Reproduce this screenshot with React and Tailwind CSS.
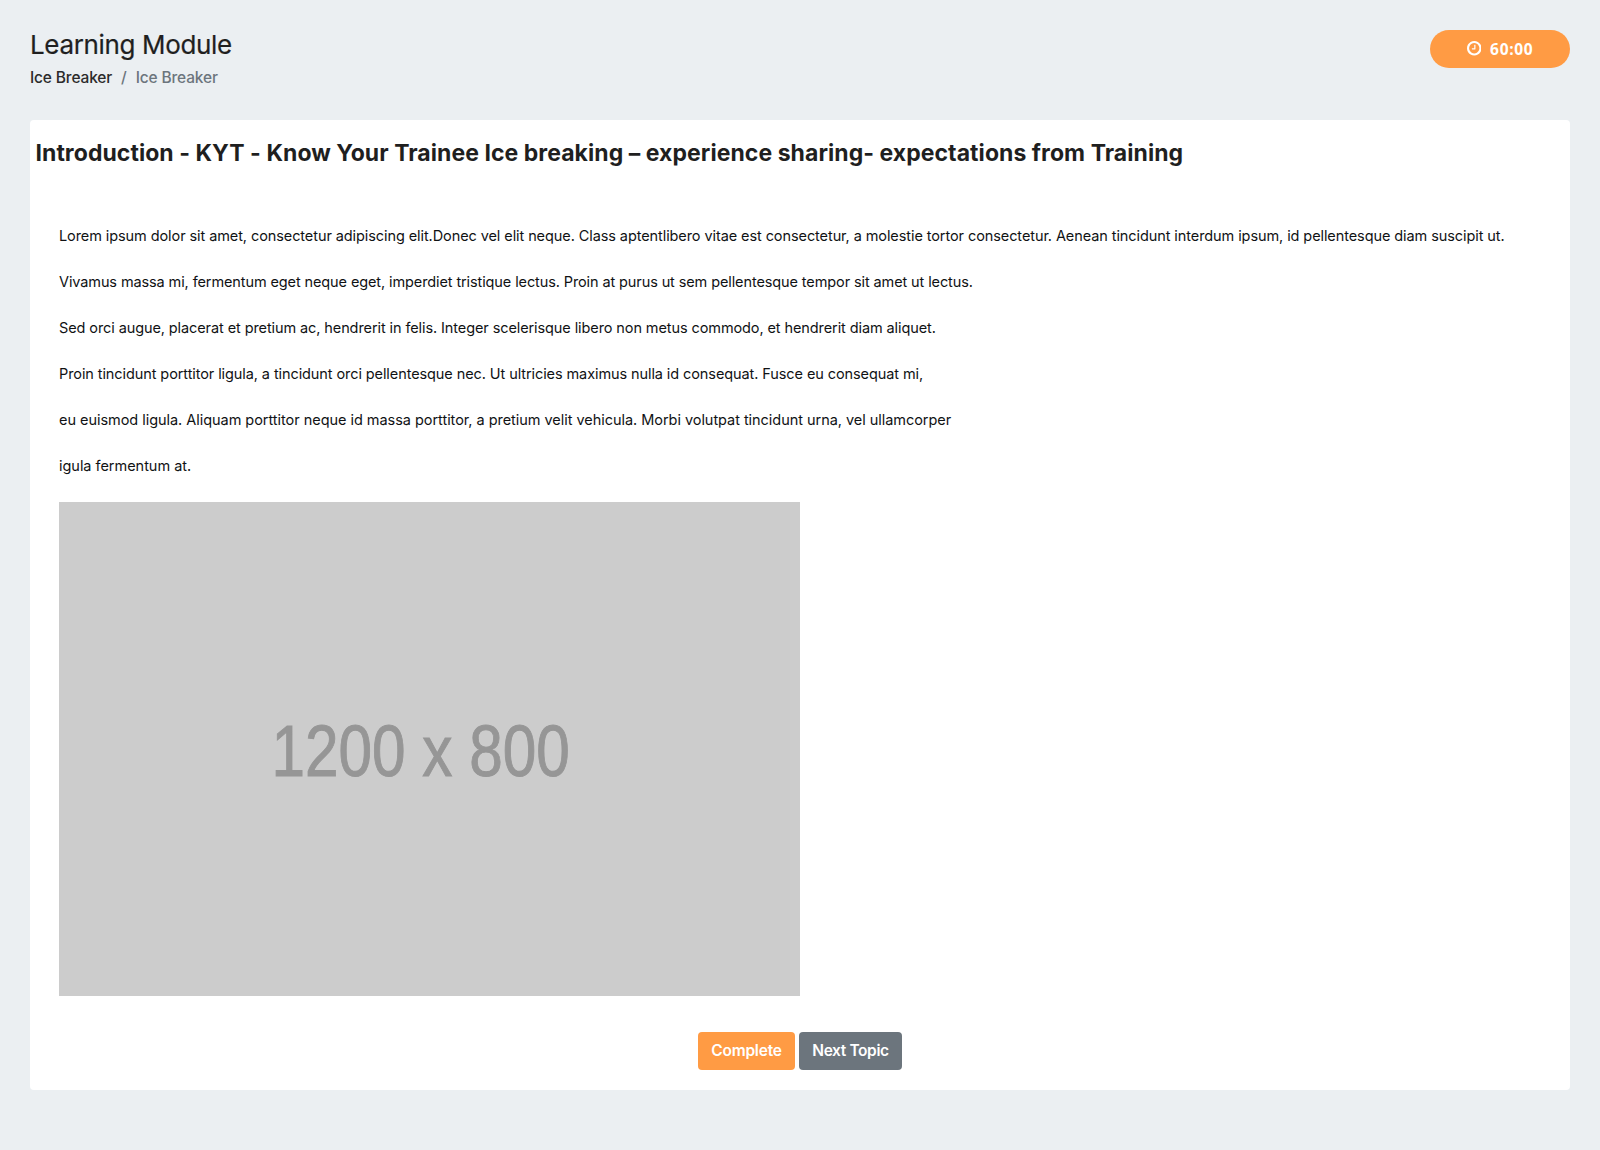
const paragraphs = [
  {
    text: "Lorem ipsum dolor sit amet, consectetur adipiscing elit.Donec vel elit neque. Class aptentlibero vitae est consectetur, a molestie tortor consectetur. Aenean tincidunt interdum ipsum, id pellentesque diam suscipit ut.",
    tracking: "tracking-[-0.086px]",
  },
  {
    text: "Vivamus massa mi, fermentum eget neque eget, imperdiet tristique lectus. Proin at purus ut sem pellentesque tempor sit amet ut lectus.",
    tracking: "tracking-[-0.108px]",
  },
  {
    text: "Sed orci augue, placerat et pretium ac, hendrerit in felis. Integer scelerisque libero non metus commodo, et hendrerit diam aliquet.",
    tracking: "tracking-[-0.097px]",
  },
  {
    text: "Proin tincidunt porttitor ligula, a tincidunt orci pellentesque nec. Ut ultricies maximus nulla id consequat. Fusce eu consequat mi,",
    tracking: "tracking-[-0.09px]",
  },
  {
    text: "eu euismod ligula. Aliquam porttitor neque id massa porttitor, a pretium velit vehicula. Morbi volutpat tincidunt urna, vel ullamcorper",
    tracking: "tracking-[-0.04px]",
  },
  { text: "igula fermentum at.", tracking: "tracking-[-0.03px]" },
];

function ClockIcon() {
  return (
    <svg viewBox="0 128 1536 1536" className="size-[14.5px] fill-current" aria-hidden="true">
      <path d="M896 544v448q0 14-9 23t-23 9h-320q-14 0-23-9t-9-23v-64q0-14 9-23t23-9h224v-352q0-14 9-23t23-9h64q14 0 23 9t9 23zm416 352q0-148-73-273t-198-198-273-73-273 73-198 198-73 273 73 273 198 198 273 73 273-73 198-198 73-273zm224 0q0 209-103 385.5t-279.5 279.5-385.5 103-385.5-103-279.5-279.5-103-385.5 103-385.5 279.5-279.5 385.5-103 385.5 103 279.5 279.5 103 385.5z" />
    </svg>
  );
}

function Header() {
  return (
    <header className="flex h-[90px] items-start justify-between">
      <div>
        <h1 className="pt-px text-[26px] leading-7 tracking-[-0.35px] text-[#1f1f1f] [-webkit-text-stroke:0.2px_currentColor]">Learning Module</h1>
        <nav className="mt-[7px] flex gap-[9px] text-[15.5px] leading-6 font-medium tracking-[-0.15px] text-[#6c757d]">
          <a className="text-[#2b2b2b]">Ice Breaker</a>
          <span>/</span>
          <span>Ice Breaker</span>
        </nav>
      </div>
      <div className="flex h-[38px] w-[140px] items-center justify-center gap-[9px] rounded-full bg-[#ff9b44] pb-px text-white">
        <ClockIcon />
        <span className="font-['Open_Sans',sans-serif] text-[15.5px] leading-6 font-bold tracking-[0.7px]">60:00</span>
      </div>
    </header>
  );
}

export default function App() {
  return (
    <div className="min-h-screen bg-[#ebeff2] p-[30px] font-['Inter',sans-serif] text-[#1f1f1f]">
      <Header />
      <main className="h-[970px] rounded bg-white pt-[19px]">
        <h2 className="pl-[5.5px] text-[23px] leading-7 font-bold tracking-[0.055px]">
          Introduction - KYT - Know Your Trainee Ice breaking – experience sharing- expectations from Training
        </h2>
        <div className="mt-[46px] pl-[29px]">
          {paragraphs.map(({ text, tracking }) => (
            <p key={text} className={`h-[46px] text-[14.5px] leading-[46px] whitespace-nowrap text-[#101214] ${tracking}`}>
              {text}
            </p>
          ))}
          <div className="mt-[13px] flex h-[494px] w-[741px] items-center justify-center bg-[#cccccc]">
            <span className="-translate-x-[9px] translate-y-px scale-x-[0.825] font-['Liberation_Sans',sans-serif] text-[73px] leading-none whitespace-nowrap text-[#969696] [-webkit-text-stroke:1px_#969696]">
              1200 x 800
            </span>
          </div>
        </div>
        <div className="mt-9 flex justify-center gap-1 text-[15.5px] font-semibold text-white">
          <button className="h-[38px] w-[97px] rounded bg-[#ff9b44] tracking-[-0.2px]">Complete</button>
          <button className="h-[38px] w-[103px] rounded bg-[#6c757d] tracking-[-0.38px]">Next Topic</button>
        </div>
      </main>
    </div>
  );
}
